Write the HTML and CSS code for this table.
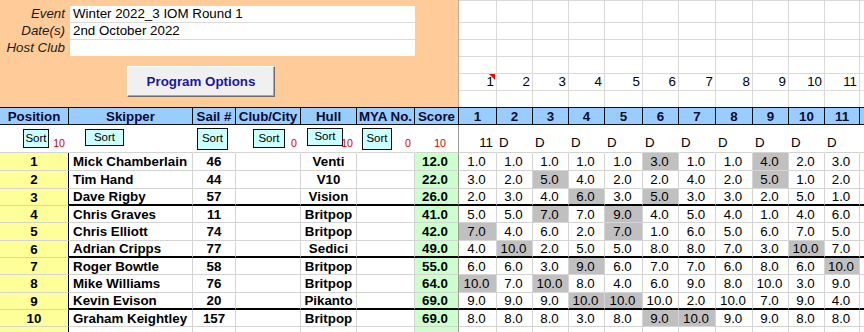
FILE: index.html
```html
<!DOCTYPE html>
<html>
<head>
<meta charset="utf-8">
<link rel="stylesheet" href="styles.css">
</head>
<body>
<div class="sheet">
  <div class="top">
    <div class="panel">
      <div class="frow"><div class="lbl">Event</div><div class="fld">Winter 2022_3 IOM Round 1</div></div>
      <div class="frow"><div class="lbl">Date(s)</div><div class="fld">2nd October 2022</div></div>
      <div class="frow last"><div class="lbl">Host Club</div><div class="fld"></div></div>
      <div class="btn">Program Options</div>
    </div>
    <div class="tgrid">
      <div class="tcol w38"><span class="rnum note">1</span></div>
      <div class="tcol w36"><span class="rnum">2</span></div>
      <div class="tcol w36"><span class="rnum">3</span></div>
      <div class="tcol w36"><span class="rnum">4</span></div>
      <div class="tcol w38"><span class="rnum">5</span></div>
      <div class="tcol w36"><span class="rnum">6</span></div>
      <div class="tcol w37"><span class="rnum">7</span></div>
      <div class="tcol w37"><span class="rnum">8</span></div>
      <div class="tcol w36"><span class="rnum">9</span></div>
      <div class="tcol w36"><span class="rnum">10</span></div>
      <div class="tcol w35"><span class="rnum">11</span></div>
      <div class="tcol w40"></div>
    </div>
  </div>

  <div class="row head">
    <div class="c">Position</div><div class="c">Skipper</div><div class="c">Sail #</div><div class="c">Club/City</div><div class="c">Hull</div><div class="c">MYA No.</div><div class="c">Score</div>
    <div class="c">1</div><div class="c">2</div><div class="c">3</div><div class="c">4</div><div class="c">5</div><div class="c">6</div><div class="c">7</div><div class="c">8</div><div class="c">9</div><div class="c">10</div><div class="c">11</div><div class="c"></div>
  </div>

  <div class="row sorts">
    <div class="c"><div class="sort s-pos">Sort</div><span class="red">10</span></div>
    <div class="c"><div class="sort s-skip">Sort</div></div>
    <div class="c"><div class="sort s-sail">Sort</div></div>
    <div class="c"><div class="sort s-club">Sort</div><span class="red">0</span></div>
    <div class="c"><div class="sort s-hull">Sort</div><span class="red">10</span></div>
    <div class="c"><div class="sort s-mya">Sort</div><span class="red">0</span></div>
    <div class="c sc"><span class="red">10</span></div>
    <div class="c rc first">11</div>
    <div class="c rc">D</div><div class="c rc">D</div><div class="c rc">D</div><div class="c rc">D</div><div class="c rc">D</div><div class="c rc">D</div><div class="c rc">D</div><div class="c rc">D</div><div class="c rc">D</div><div class="c rc">D</div>
    <div class="c"></div>
  </div>

  <div class="row data r18">
    <div class="c pos">1</div><div class="c name">Mick Chamberlain</div><div class="c mid">46</div><div class="c"></div><div class="c mid">Venti</div><div class="c"></div><div class="c score">12.0</div>
    <div class="c v">1.0</div><div class="c v">1.0</div><div class="c v">1.0</div><div class="c v">1.0</div><div class="c v">1.0</div><div class="c v x">3.0</div><div class="c v">1.0</div><div class="c v">1.0</div><div class="c v x">4.0</div><div class="c v">2.0</div><div class="c v">3.0</div><div class="c"></div>
  </div>
  <div class="row data r18">
    <div class="c pos">2</div><div class="c name">Tim Hand</div><div class="c mid">44</div><div class="c"></div><div class="c mid">V10</div><div class="c"></div><div class="c score">22.0</div>
    <div class="c v">3.0</div><div class="c v">2.0</div><div class="c v x">5.0</div><div class="c v">4.0</div><div class="c v">2.0</div><div class="c v">2.0</div><div class="c v">4.0</div><div class="c v">2.0</div><div class="c v x">5.0</div><div class="c v">1.0</div><div class="c v">2.0</div><div class="c"></div>
  </div>
  <div class="row data r17 grp">
    <div class="c pos">3</div><div class="c name">Dave Rigby</div><div class="c mid">57</div><div class="c"></div><div class="c mid">Vision</div><div class="c"></div><div class="c score">26.0</div>
    <div class="c v">2.0</div><div class="c v">3.0</div><div class="c v">4.0</div><div class="c v x">6.0</div><div class="c v">3.0</div><div class="c v x">5.0</div><div class="c v">3.0</div><div class="c v">3.0</div><div class="c v">2.0</div><div class="c v">5.0</div><div class="c v">1.0</div><div class="c"></div>
  </div>
  <div class="row data r17">
    <div class="c pos">4</div><div class="c name">Chris Graves</div><div class="c mid">11</div><div class="c"></div><div class="c mid">Britpop</div><div class="c"></div><div class="c score">41.0</div>
    <div class="c v">5.0</div><div class="c v">5.0</div><div class="c v x">7.0</div><div class="c v">7.0</div><div class="c v x">9.0</div><div class="c v">4.0</div><div class="c v">5.0</div><div class="c v">4.0</div><div class="c v">1.0</div><div class="c v">4.0</div><div class="c v">6.0</div><div class="c"></div>
  </div>
  <div class="row data r18">
    <div class="c pos">5</div><div class="c name">Chris Elliott</div><div class="c mid">74</div><div class="c"></div><div class="c mid">Britpop</div><div class="c"></div><div class="c score">42.0</div>
    <div class="c v x">7.0</div><div class="c v">4.0</div><div class="c v">6.0</div><div class="c v">2.0</div><div class="c v x">7.0</div><div class="c v">1.0</div><div class="c v">6.0</div><div class="c v">5.0</div><div class="c v">6.0</div><div class="c v">7.0</div><div class="c v">5.0</div><div class="c"></div>
  </div>
  <div class="row data r17 grp">
    <div class="c pos">6</div><div class="c name">Adrian Cripps</div><div class="c mid">77</div><div class="c"></div><div class="c mid">Sedici</div><div class="c"></div><div class="c score">49.0</div>
    <div class="c v">4.0</div><div class="c v x">10.0</div><div class="c v">2.0</div><div class="c v">5.0</div><div class="c v">5.0</div><div class="c v">8.0</div><div class="c v">8.0</div><div class="c v">7.0</div><div class="c v">3.0</div><div class="c v x">10.0</div><div class="c v">7.0</div><div class="c"></div>
  </div>
  <div class="row data r17">
    <div class="c pos">7</div><div class="c name">Roger Bowtle</div><div class="c mid">58</div><div class="c"></div><div class="c mid">Britpop</div><div class="c"></div><div class="c score">55.0</div>
    <div class="c v">6.0</div><div class="c v">6.0</div><div class="c v">3.0</div><div class="c v x">9.0</div><div class="c v">6.0</div><div class="c v">7.0</div><div class="c v">7.0</div><div class="c v">6.0</div><div class="c v">8.0</div><div class="c v">6.0</div><div class="c v x">10.0</div><div class="c"></div>
  </div>
  <div class="row data r18">
    <div class="c pos">8</div><div class="c name">Mike Williams</div><div class="c mid">76</div><div class="c"></div><div class="c mid">Britpop</div><div class="c"></div><div class="c score">64.0</div>
    <div class="c v x">10.0</div><div class="c v">7.0</div><div class="c v x">10.0</div><div class="c v">8.0</div><div class="c v">4.0</div><div class="c v">6.0</div><div class="c v">9.0</div><div class="c v">8.0</div><div class="c v">10.0</div><div class="c v">3.0</div><div class="c v">9.0</div><div class="c"></div>
  </div>
  <div class="row data r17 grp">
    <div class="c pos">9</div><div class="c name">Kevin Evison</div><div class="c mid">20</div><div class="c"></div><div class="c mid">Pikanto</div><div class="c"></div><div class="c score">69.0</div>
    <div class="c v">9.0</div><div class="c v">9.0</div><div class="c v">9.0</div><div class="c v x">10.0</div><div class="c v x">10.0</div><div class="c v">10.0</div><div class="c v">2.0</div><div class="c v">10.0</div><div class="c v">7.0</div><div class="c v">9.0</div><div class="c v">4.0</div><div class="c"></div>
  </div>
  <div class="row data r17">
    <div class="c pos">10</div><div class="c name">Graham Keightley</div><div class="c mid">157</div><div class="c"></div><div class="c mid">Britpop</div><div class="c"></div><div class="c score">69.0</div>
    <div class="c v">8.0</div><div class="c v">8.0</div><div class="c v">8.0</div><div class="c v">3.0</div><div class="c v">8.0</div><div class="c v x">9.0</div><div class="c v x">10.0</div><div class="c v">9.0</div><div class="c v">9.0</div><div class="c v">8.0</div><div class="c v">8.0</div><div class="c"></div>
  </div>
  <div class="row data r17">
    <div class="c pos"></div><div class="c name"></div><div class="c"></div><div class="c"></div><div class="c"></div><div class="c"></div><div class="c score"></div>
    <div class="c v"></div><div class="c v"></div><div class="c v"></div><div class="c v"></div><div class="c v"></div><div class="c v"></div><div class="c v"></div><div class="c v"></div><div class="c v"></div><div class="c v"></div><div class="c v"></div><div class="c"></div>
  </div>
</div>
</body>
</html>
```

FILE: styles.css
```css
* { box-sizing: border-box; }
html, body { margin: 0; padding: 0; }
body {
  width: 864px;
  height: 332px;
  overflow: hidden;
  background: #ffffff;
  font-family: "Liberation Sans", Arial, sans-serif;
  font-size: 13.33px;
  color: #000;
}
.sheet {
  --cols: 69px 124px 43px 65px 56px 58px 44px 38px 36px 36px 36px 38px 36px 37px 37px 36px 36px 35px 40px;
  width: 904px;
}

/* ---------- top area ---------- */
.top { display: flex; height: 107px; }
.panel {
  width: 459px;
  flex: none;
  background: #ffcc99;
  border-right: 1px solid #c9ad93;
  padding-top: 6px;
}
.frow { display: flex; height: 17px; }
.frow.last { height: 16px; }
.lbl {
  width: 70px;
  text-align: right;
  padding-right: 5px;
  font-style: italic;
  line-height: 16px;
  color: #1a1a1a;
}
.fld {
  width: 345px;
  background: #fff;
  border-bottom: 1px solid #dcdcdc;
  padding-left: 3px;
  line-height: 16px;
}
.frow.last .fld { border-bottom: none; }
.btn {
  margin: 10px 0 0 127px;
  width: 148px;
  height: 31px;
  background: #f0f0f0;
  border: 1px solid;
  border-color: #ffffff #6d6d6d #6d6d6d #ffffff;
  box-shadow: inset -1px -1px 0 #a8a8a8;
  color: #1818a8;
  font-weight: bold;
  display: flex;
  align-items: center;
  justify-content: center;
  padding-bottom: 1px;
}
.tgrid {
  display: flex;
  height: 107px;
  background-image: repeating-linear-gradient(to bottom, transparent 0, transparent 16px, #dadada 16px, #dadada 17px);
  background-position: 0 6px;
}
.tcol {
  flex: none;
  border-right: 1px solid #dadada;
  display: flex;
  flex-direction: column;
  align-items: stretch;
}
.w35 { width: 35px; } .w36 { width: 36px; } .w37 { width: 37px; } .w38 { width: 38px; } .w40 { width: 40px; border-right: none; }
.rnum {
  margin-top: 74px;
  height: 16px;
  line-height: 16px;
  text-align: right;
  padding-right: 2px;
  position: relative;
}
.rnum.note::after {
  content: "";
  position: absolute;
  right: 1px;
  top: 0;
  border-top: 6px solid #ff0000;
  border-left: 6px solid transparent;
}

/* ---------- table rows ---------- */
.row { display: grid; grid-template-columns: var(--cols); }
.c {
  border-right: 1px solid #d4d4d4;
  border-bottom: 1px solid #d4d4d4;
  white-space: nowrap;
  overflow: hidden;
  display: flex;
  align-items: center;
}

.head {
  height: 18px;
  background: #99ccff;
  border-top: 1px solid #111;
}
.head .c {
  justify-content: center;
  font-weight: bold;
  color: #0b0b33;
  border-right-color: #111;
  border-bottom-color: #111;
  font-size: 13.33px;
}

.sorts { height: 28px; }
.sorts .c {
  border-right-color: transparent;
  align-items: flex-start;
}
.sorts .c:nth-child(7) { border-right-color: #9a9a9a; }
.sort {
  flex: none;
  background: #ccffff;
  border: 1px solid #111;
  font-size: 11.5px;
  display: flex;
  align-items: center;
  justify-content: center;
  padding-bottom: 2px;
}
.s-pos { margin: 4px 0 0 23px; width: 26px; height: 19px; }
.s-skip { margin: 4px 0 0 16px; width: 39px; height: 17px; }
.s-sail { margin: 3px 0 0 4px; width: 31px; height: 22px; }
.s-club { margin: 4px 0 0 17px; width: 32px; height: 19px; }
.s-hull { margin: 3px -2px 0 6px; width: 36px; height: 18px; }
.s-mya { margin: 3px 0 0 5px; width: 30px; height: 22px; }
.red {
  flex: none;
  color: #d40000;
  font-size: 10.67px;
  margin-left: auto;
  padding-right: 3px;
  align-self: flex-end;
  margin-bottom: 3px;
}
.sorts .sc .red { padding-right: 12px; }
.rc {
  align-items: flex-end !important;
  padding: 0 0 2px 2px;
}
.rc.first { justify-content: flex-end; padding-right: 3px; }

.r18 { height: 18px; }
.r17 { height: 17px; }
.data .c { font-weight: bold; }
.pos {
  background: #ffff99;
  justify-content: center;
  border-right-color: #000 !important;
}
.name { padding-left: 4px; }
.mid { justify-content: center; }
.score {
  background: #ccffcc;
  justify-content: flex-end;
  padding-right: 10px;
  border-right-color: #9a9a9a !important;
}
.data .v {
  font-weight: normal;
  justify-content: center;
  padding-right: 2px;
}
.data .v.x { background: #c0c0c0; }
.grp .c:not(.pos) { border-bottom: 2px solid #000; }
```
